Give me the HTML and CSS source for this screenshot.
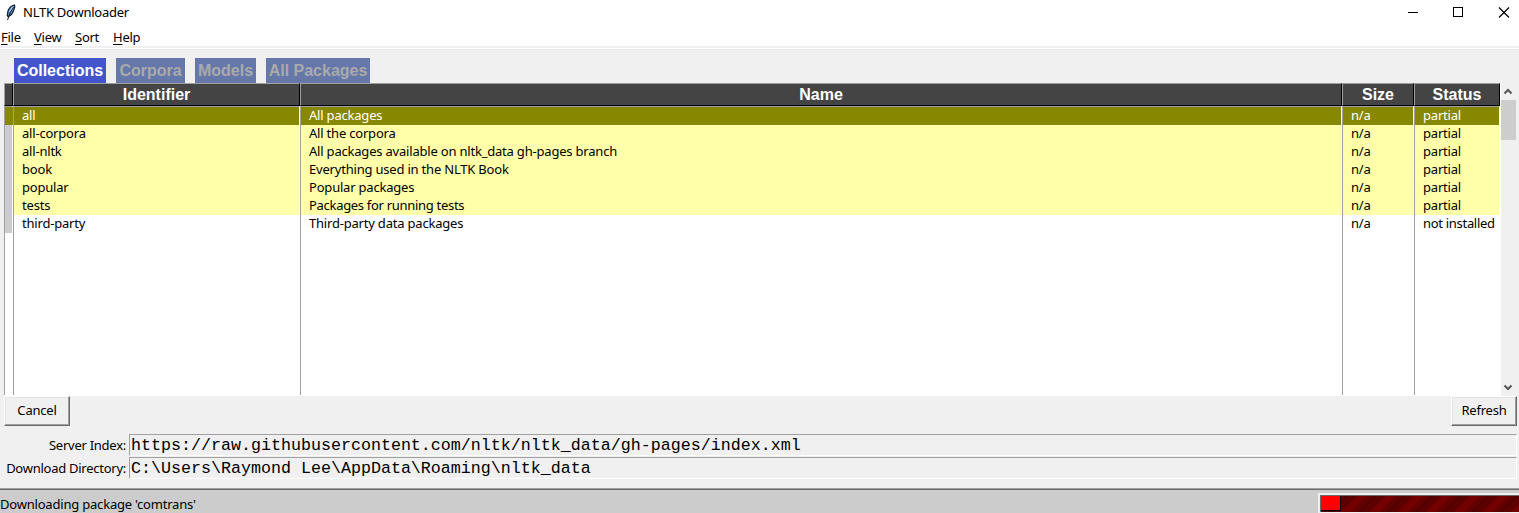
FILE: index.html
```html
<!DOCTYPE html>
<html lang="en">
<head>
<meta charset="utf-8">
<title>NLTK Downloader</title>
<link rel="stylesheet" href="styles.css">
</head>
<body>
<header class="titlebar">
  <svg class="feather" width="12" height="18" viewBox="0 0 12 18"><path d="M9.500 1C7 1.500 4 4 3 7L2.200 11.500l1 1.200L6.500 10.500 8.500 7 9.800 3z" fill="#4f8fd0" stroke="#10151c" stroke-width="1.100"/><path d="M8.500 3L5 9 2.500 16" fill="none" stroke="#18202b"/><path d="M8 2.500L4.300 8" stroke="#c2e0ff"/></svg>
  <span class="title">NLTK Downloader</span>
  <svg class="controls" width="120" height="25" viewBox="0 0 120 25" fill="none" stroke="#000"><path d="M9 12.500h10M54.500 7.500h9v9h-9z" shape-rendering="crispEdges"/><path d="M100 7.500l10 10M110 7.500l-10 10" stroke-width="1.200"/></svg>
</header>
<nav class="menu"><span class="m-file"><u>F</u>ile</span><span class="m-view"><u>V</u>iew</span><span class="m-sort"><u>S</u>ort</span><span class="m-help"><u>H</u>elp</span></nav>
<div class="tabs"><span class="tab active">Collections</span><span class="tab corpora">Corpora</span><span class="tab models">Models</span><span class="tab packages">All Packages</span></div>
<main class="table">
  <section class="col marks"><h2></h2><div class="cells"><p class="selected"></p><div class="mark"></div></div></section>
  <section class="col ident"><h2>Identifier</h2><div class="cells"><p class="selected">all</p><p class="partial">all-corpora</p><p class="partial">all-nltk</p><p class="partial">book</p><p class="partial">popular</p><p class="partial">tests</p><p>third-party</p></div></section>
  <section class="col name"><h2>Name</h2><div class="cells"><p class="selected">All packages</p><p class="partial">All the corpora</p><p class="partial">All packages available on nltk_data gh-pages branch</p><p class="partial">Everything used in the NLTK Book</p><p class="partial">Popular packages</p><p class="partial tight">Packages for running tests</p><p>Third-party data packages</p></div></section>
  <section class="col size"><h2>Size</h2><div class="cells"><p class="selected">n/a</p><p class="partial">n/a</p><p class="partial">n/a</p><p class="partial">n/a</p><p class="partial">n/a</p><p class="partial">n/a</p><p>n/a</p></div></section>
  <section class="col status"><h2>Status</h2><div class="cells"><p class="selected">partial</p><p class="partial">partial</p><p class="partial">partial</p><p class="partial">partial</p><p class="partial">partial</p><p class="partial">partial</p><p class="tight">not installed</p></div></section>
  <aside class="scroll">
    <svg width="15" height="17" viewBox="0 0 15 17"><path d="M3.500 10.500L7 7l3.500 3.500" fill="none" stroke="#555" stroke-width="2"/></svg>
    <div class="thumb"></div>
    <svg class="down" width="15" height="17" viewBox="0 0 15 17"><path d="M3.500 6.500L7 10l3.500-3.500" fill="none" stroke="#555" stroke-width="2"/></svg>
  </aside>
</main>
<div class="buttons"><button>Cancel</button><button>Refresh</button></div>
<div class="form">
  <label>Server Index:</label><div class="entry">https://raw.githubusercontent.com/nltk/nltk_data/gh-pages/index.xml</div>
  <label>Download Directory:</label><div class="entry">C:\Users\Raymond Lee\AppData\Roaming\nltk_data</div>
</div>
<footer class="statusbar"><span>Downloading package 'comtrans'</span><div class="progress"><div class="done"></div></div></footer>
</body>
</html>
```
FILE: styles.css
```css
* { box-sizing: border-box; }
body { margin: 0; width: 1519px; height: 513px; overflow: hidden; background: #f0f0f0; color: #000; font: 13px/18px "Noto Sans", "Open Sans", sans-serif; letter-spacing: -0.2px; white-space: nowrap; }
h2, p { margin: 0; }
.titlebar { height: 25px; background: #fff; display: flex; align-items: flex-start; }
.feather { margin: 4px 6px 0 5px; }
.title { padding-top: 3px; letter-spacing: -0.25px; }
.controls { margin-left: auto; }
.menu { height: 21px; background: #fff; display: flex; padding: 3px 0 0 1px; letter-spacing: -0.25px; }
.menu span { flex: none; }
.m-file { width: 33px; }
.m-view { width: 41px; }
.m-sort { width: 38px; }
.menu u { text-underline-offset: 2px; text-decoration-thickness: 1px; }
.tabs { height: 37px; padding: 12px 0 0 14px; display: flex; gap: 10px; background: linear-gradient(#f0f0f0 0 2px, #fff 2px 3px, #e3e3e3 3px 4px, #f0f0f0 4px); }
.tab { height: 25px; background: #6678aa; color: #aaa; font: bold 16px/25px "Liberation Sans", Arial, sans-serif; letter-spacing: 0; text-align: center; }
.active { width: 92px; background: #4455cc; color: #fff; }
.corpora { width: 69px; }
.models { width: 61px; }
.packages { width: 104px; }
.table { height: 313px; padding-left: 4px; display: grid; grid-template-columns: 9px 287px 1042px 72px 86px 19px; }
.col { background: #fff; }
.col h2 { height: 23px; background: #444; color: #fff; border: 1px solid; border-color: #a0a0a0 #000 #000 #a0a0a0; font: bold 16px/21px "Liberation Sans", Arial, sans-serif; letter-spacing: 0; text-align: center; }
.cells { height: 289px; border-left: 1px solid #a0a0a0; border-top: 1px solid #a0a0a0; border-right: 1px solid #fff; }
.cells p { height: 18px; padding-left: 8px; line-height: 16px; }
.selected { background: #888800; color: #fff; }
.partial { background: #ffffaa; }
.tight { letter-spacing: -0.3px; }
.mark { height: 108px; background: #ccc; }
.scroll { border-left: 1px solid #fff; width: 16px; display: flex; flex-direction: column; }
.scroll svg { display: block; }
.thumb { width: 15px; height: 40px; background: #cdcdcd; }
.scroll .down { margin-top: auto; }
.buttons { height: 38px; padding: 0 2px 0 4px; display: flex; justify-content: space-between; }
button { width: 66px; height: 30px; padding: 0 0 2px; border: 1px solid; border-color: #fff #696969 #696969 #fff; box-shadow: inset -1px -1px #a0a0a0, inset 1px 1px #e3e3e3; background: #f0f0f0; color: #000; font: inherit; letter-spacing: inherit; }
.form { height: 54px; padding-right: 2px; display: grid; grid-template-columns: 127px 1388px; grid-template-rows: 22px 22px; gap: 1px 2px; align-content: start; }
label { text-align: right; line-height: 22px; padding-right: 1px; letter-spacing: -0.26px; }
.entry { border: 1px solid; border-color: #a0a0a0 #fff #fff #a0a0a0; padding-left: 1px; font: 16.670px/21px "Liberation Mono", "Courier New", monospace; letter-spacing: 0; }
.statusbar { height: 25px; border-top: 1px solid #a0a0a0; box-shadow: inset 0 1px #696969; background: #ccc; display: flex; justify-content: space-between; line-height: 31px; }
.progress { margin-top: 4px; width: 201px; height: 20px; border: 2px solid #f0f0f0; border-right: 0; border-bottom-width: 1px; background: repeating-linear-gradient(135deg, #500000 0, #610000 3px, #560000 5px, #730000 8px, #750000 13px, #600000 15px, #650000 17px, #500000 20px); box-shadow: inset 1px 1px #696969; padding: 1px 0 0 1px; }
.done { width: 20px; height: 15px; background: #f00; border-right: 1px solid #000; border-bottom: 1px solid #000; }
```
